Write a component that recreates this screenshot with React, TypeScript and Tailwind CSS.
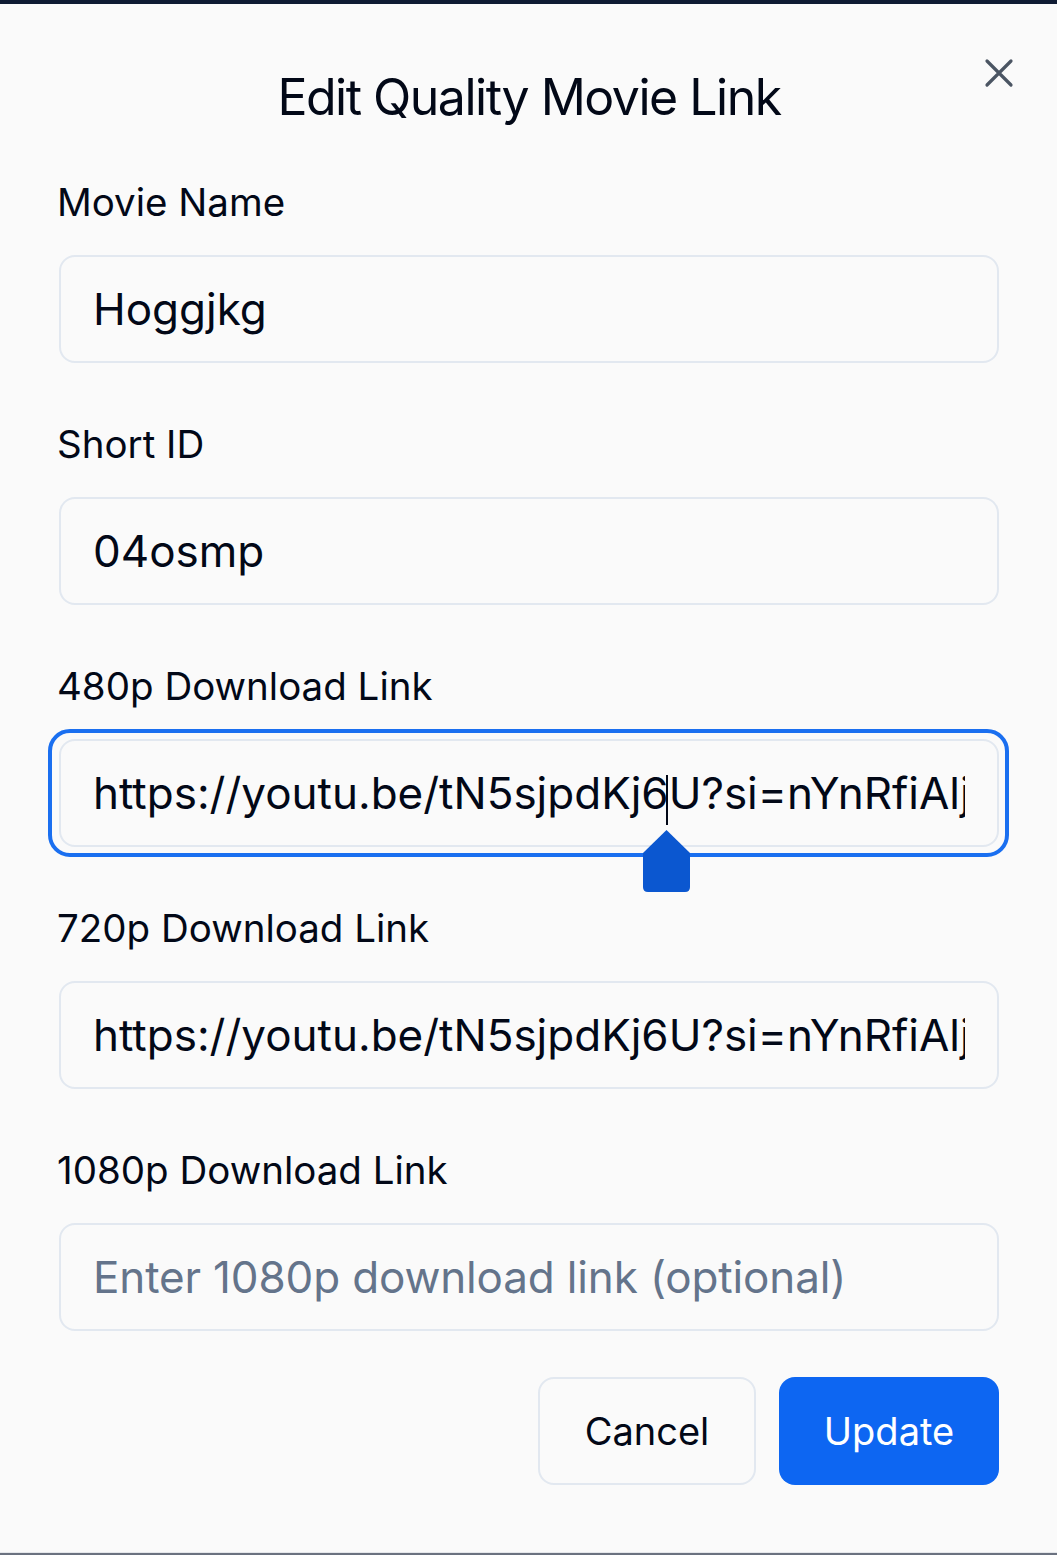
import React from "react";

function Label({ children }: { children: React.ReactNode }) {
  return (
    <div className="text-[38.5px] leading-[48px] text-[#020817] mb-[29px] -ml-[2px]">
      {children}
    </div>
  );
}

function Field({ children, focused, overlay }: { children: React.ReactNode; focused?: boolean; overlay?: React.ReactNode }) {
  return (
    <div className="relative">
      {focused && (
        <div className="absolute -left-[11px] -right-[10px] -top-[10px] -bottom-[10px] rounded-[22px] border-[4px] border-[#1a6ff0] pointer-events-none" />
      )}
      <div className="h-[108px] rounded-[16px] border-2 border-[#e2e8f0] bg-[#fafafa] flex items-center pl-[32px] pr-[32px]">
        <div className="flex-1 overflow-hidden whitespace-nowrap">{children}</div>
      </div>
      {overlay}
    </div>
  );
}

export default function App() {
  const url = "https://youtu.be/tN5sjpdKj6U?si=nYnRfiAlj9xK";
  return (
    <div className="w-[1057px] h-[1555px] bg-[#fafafa] flex flex-col relative overflow-hidden" style={{ fontFamily: "Inter, 'Noto Sans', sans-serif" }}>
      <div className="h-[4px] bg-[#0f1b33] shrink-0" />
      <div className="relative pr-[58px] pl-[59px]">
        <button className="absolute right-[43px] top-[54px] w-[30px] h-[30px] flex items-center justify-center text-[#4b5563]">
          <svg width="30" height="30" viewBox="0 0 30 30" fill="none" stroke="currentColor" strokeWidth="3.2" strokeLinecap="round">
            <path d="M3 3L27 27M27 3L3 27" />
          </svg>
        </button>
        <h1 className="mt-[63px] text-center text-[50px] leading-[60px] font-normal text-[#020817] tracking-[-1.5px]">
          Edit Quality Movie Link
        </h1>
        <div className="mt-[51px] flex flex-col gap-[57px]">
          <div>
            <Label>Movie Name</Label>
            <Field>
              <span className="text-[44px] text-[#020817]">Hoggjkg</span>
            </Field>
          </div>
          <div>
            <Label>Short ID</Label>
            <Field>
              <span className="text-[44px] text-[#020817]">04osmp</span>
            </Field>
          </div>
          <div>
            <Label>480p Download Link</Label>
            <Field
              focused
              overlay={
                <>
                  <div className="absolute left-[607px] top-[36px] w-[2px] h-[50px] bg-[#020817]" />
                  <svg className="absolute left-[582px] top-[90px]" width="51" height="64" viewBox="0 0 51 64">
                    <path d="M25.5 1 L49 24 L49 58 Q49 63 44 63 L7 63 Q2 63 2 58 L2 24 Z" fill="#0b57d0" />
                  </svg>
                </>
              }
            >
              <span className="text-[44px] text-[#020817]">{url}</span>
            </Field>
          </div>
          <div>
            <Label>720p Download Link</Label>
            <Field>
              <span className="text-[44px] text-[#020817]">{url}</span>
            </Field>
          </div>
          <div>
            <Label>1080p Download Link</Label>
            <Field>
              <span className="text-[44px] text-[#64748b] tracking-[-0.15px]">Enter 1080p download link (optional)</span>
            </Field>
          </div>
        </div>
        <div className="mt-[46px] flex justify-end gap-[23px]">
          <button className="w-[218px] h-[108px] rounded-[16px] border-2 border-[#e2e8f0] bg-[#fafafa] text-[38px] text-[#020817]">
            Cancel
          </button>
          <button className="w-[220px] h-[108px] rounded-[16px] bg-[#0d66f2] text-[38px] text-white">
            Update
          </button>
        </div>
      </div>
      <div className="absolute bottom-0 left-0 right-0 h-[3px] bg-[#6b7280] border-t border-[#e5e7eb]" />
    </div>
  );
}
